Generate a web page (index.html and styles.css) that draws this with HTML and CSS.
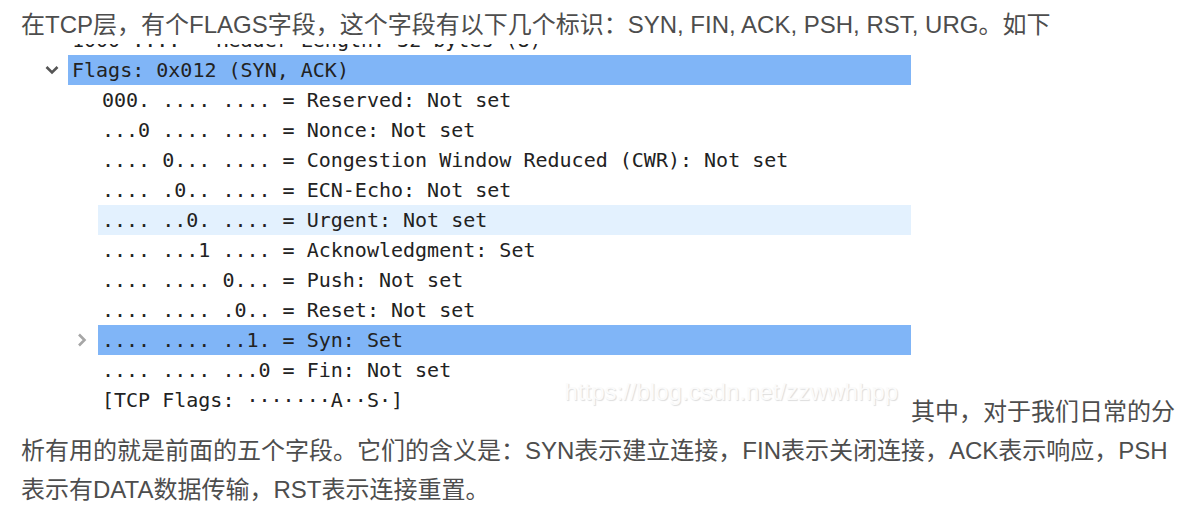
FILE: index.html
```html
<!DOCTYPE html>
<html lang="zh-CN">
<head>
<meta charset="utf-8">
<meta name="viewport" content="width=device-width, initial-scale=1">
<title>TCP FLAGS</title>
<link rel="stylesheet" href="styles.css">
</head>
<body>
<main class="article">
在TCP层，有个FLAGS字段，这个字段有以下几个标识：SYN, FIN, ACK, PSH, RST, URG。如下
<div class="capture"><div class="clipped"><span class="label">1000 .... = Header Length: 32 bytes (8)</span></div>
<div class="row root"><button class="toggle" aria-label="Collapse Flags"><svg class="icon" viewBox="0 0 14 14"><path d="M1.5 4 L7 9.5 L12.5 4" fill="none" stroke="#555" stroke-width="2.6"/></svg></button><span class="label selected">Flags: 0x012 (SYN, ACK)</span></div>
<ul class="fields">
<li class="row"><span class="label">000. .... .... = Reserved: Not set</span></li>
<li class="row"><span class="label">...0 .... .... = Nonce: Not set</span></li>
<li class="row"><span class="label">.... 0... .... = Congestion Window Reduced (CWR): Not set</span></li>
<li class="row"><span class="label">.... .0.. .... = ECN-Echo: Not set</span></li>
<li class="row"><span class="label hovered">.... ..0. .... = Urgent: Not set</span></li>
<li class="row"><span class="label">.... ...1 .... = Acknowledgment: Set</span></li>
<li class="row"><span class="label">.... .... 0... = Push: Not set</span></li>
<li class="row"><span class="label">.... .... .0.. = Reset: Not set</span></li>
<li class="row"><button class="toggle" aria-label="Expand Syn"><svg class="icon" viewBox="0 0 14 14"><path d="M4 1.5 L9.5 7 L4 12.5" fill="none" stroke="#a6a6a6" stroke-width="2.6"/></svg></button><span class="label selected">.... .... ..1. = Syn: Set</span></li>
<li class="row"><span class="label">.... .... ...0 = Fin: Not set</span></li>
<li class="row"><span class="label">[TCP Flags: ·······A··S·]</span></li>
</ul>
<span class="watermark">https://blog.csdn.net/zzwwhhpp</span></div>其中，对于我们日常的分析有用的就是前面的五个字段。它们的含义是：SYN表示建立连接，FIN表示关闭连接，ACK表示响应，PSH表示有DATA数据传输，RST表示连接重置。
</main>
</body>
</html>
```
FILE: styles.css
```css
body {
  margin: 0;
  background: #fff;
}

.article {
  padding: 5px 21px;
  color: #4d4d4d;
  font-family: "Liberation Sans", "Noto Sans CJK SC", sans-serif;
  font-size: 24px;
  line-height: 39px;
}

.capture {
  display: inline-block;
  position: relative;
  overflow: hidden;
  box-sizing: border-box;
  width: calc(100% - 268px);
  padding-bottom: 5px;
  color: #222;
  font-family: "DejaVu Sans Mono", monospace;
  font-size: 20px;
  line-height: 30px;
}

.clipped {
  display: flex;
  align-items: flex-end;
  height: 11px;
  padding-left: 47px;
  overflow: hidden;
}

.fields {
  margin: 0;
  padding: 0;
  list-style: none;
}

.row {
  display: flex;
  padding-left: 77px;
}

.root {
  padding-left: 47px;
}

.label {
  flex: 1;
  padding-left: 4px;
}

.selected {
  background: #80b5f7;
}

.hovered {
  background: #e3f1fe;
}

.toggle {
  display: flex;
  align-items: center;
  width: 23px;
  height: 30px;
  margin-left: -23px;
  padding: 0;
  border: 0;
  background: none;
}

.icon {
  width: 14px;
  height: 14px;
}

.watermark {
  position: absolute;
  right: 13px;
  bottom: 13px;
  color: #fbfbfb;
  font-family: "Liberation Sans", sans-serif;
  font-size: 24px;
  text-shadow: 1px 1px 1px #ddd;
}
```
